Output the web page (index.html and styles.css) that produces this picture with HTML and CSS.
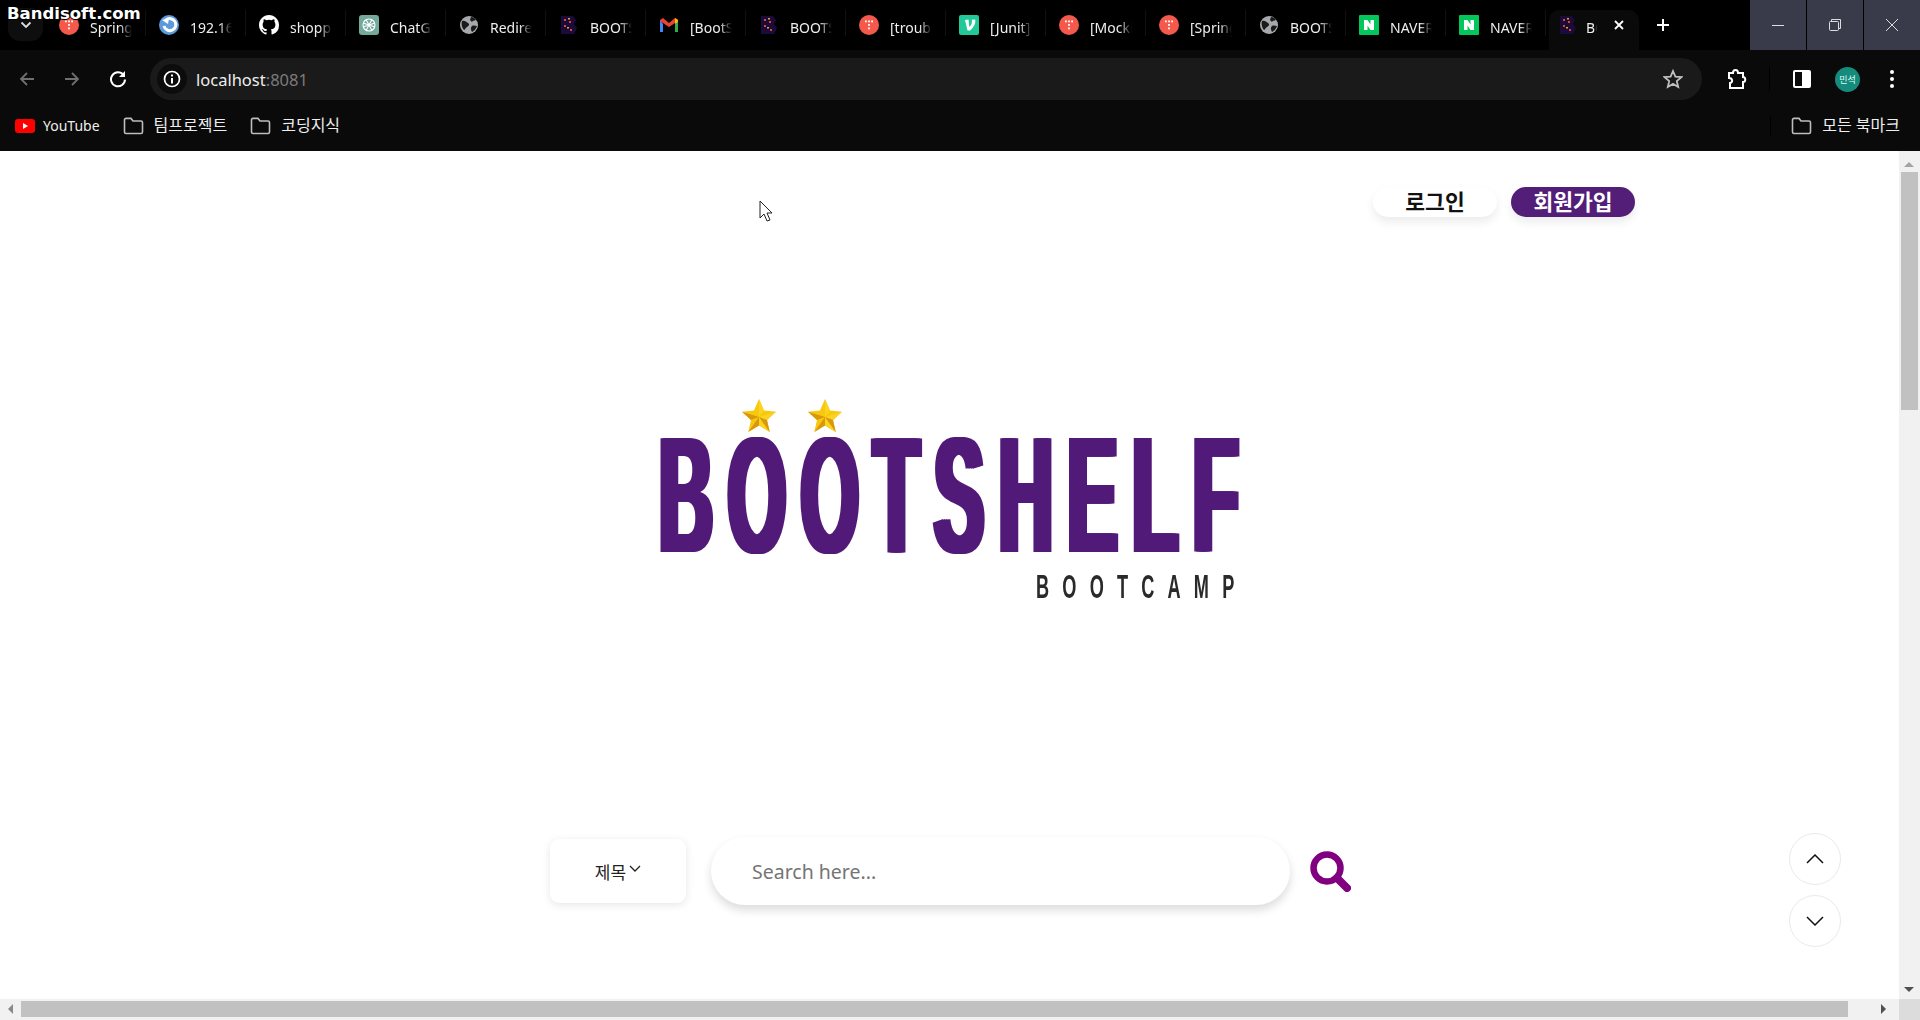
FILE: index.html
```html
<!DOCTYPE html>
<html lang="ko">
<head>
  <meta charset="UTF-8">
  <title>BOOTSHELF</title>
  <link rel="stylesheet" href="styles.css">
</head>
<body>
  <svg class="defs" width="0" height="0">
    <symbol id="tistory" viewBox="0 0 20 20">
      <circle cx="10" cy="10" r="10" fill="#f4594c"/>
      <g fill="#fff"><rect x="6" y="5.500" width="1.800" height="1.800"/><rect x="9.100" y="5.500" width="1.800" height="1.800"/><rect x="12.200" y="5.500" width="1.800" height="1.800"/><rect x="9.100" y="9" width="1.800" height="1.800"/><rect x="9.100" y="12.500" width="1.800" height="1.800"/></g>
    </symbol>
    <symbol id="globe" viewBox="0 0 20 20">
      <circle cx="10" cy="10" r="9" fill="#a5a8ad"/>
      <path d="M3 6c3-1 4 1 6 2s1 3-1 4-2 3-3 3c-2-2-3-6-2-9zM12 2c2 0 4 1 5 3-2 1-3 0-4 2l-2-2zM13 11c2-1 3 0 5 0-1 3-3 5-5 6-1-2-2-4 0-6z" fill="#1a1a1a"/>
    </symbol>
    <symbol id="boot" viewBox="0 0 20 20">
      <path d="M2 1h12l3 4-2 4 3 4-3 6H2z" fill="#1a0b3a"/>
      <g fill="#d8472f"><rect x="5" y="4" width="2" height="2"/><rect x="10" y="6" width="2" height="2"/><rect x="5" y="10" width="2" height="2"/><rect x="11" y="14" width="2" height="2"/></g>
      <g fill="#f0a030"><rect x="9" y="3" width="2" height="1.500"/><rect x="8" y="12" width="2" height="1.500"/></g>
    </symbol>
    <symbol id="naver" viewBox="0 0 20 20">
      <rect width="20" height="20" rx="1" fill="#03c75a"/>
      <path d="M5 5h3.500l3 4.500V5H15v10h-3.500l-3-4.500V15H5z" fill="#fff"/>
    </symbol>
    <symbol id="folder" viewBox="0 0 21 18">
      <path d="M1.500 3c0-1 .6-1.600 1.500-1.600h5l2 2.600h8c1 0 1.500.6 1.500 1.500V15c0 1-.6 1.500-1.500 1.500H3c-1 0-1.500-.6-1.500-1.500z" fill="none" stroke="#bdbdbd" stroke-width="1.600"/>
    </symbol>
    <symbol id="star" viewBox="0 0 34 33">
      <path d="M17 0l5 11.500 12 1.200-9 8.300 2.700 12L17 26.500 6.300 33 9 21 0 12.700l12-1.200z" fill="#f7c80c"/>
      <path d="M17 0l5 11.500L17 18zM34 12.700L25 21 17 18zM27.700 33L17 26.500V18z" fill="#fbd321"/>
      <path d="M17 18l8 3 2.700 12zM17 18v8.500L6.300 33zM17 18l-8 3-9-8.300z" fill="#d9960f"/>
    </symbol>
  </svg>

  <div class="watermark">Bandisoft.com</div>

  <header class="chrome">
    <div class="tabstrip">
      <div class="tab-menu">
        <svg width="12" height="8" viewBox="0 0 12 8"><path d="M1.500 1.500L6 6l4.500-4.500" fill="none" stroke="#ddd" stroke-width="1.800"/></svg>
      </div>
      <div class="tabs">
        <div class="tab"><svg class="favicon"><use href="#tistory"/></svg><span class="tab-title">Spring</span></div>
        <div class="tab">
          <svg class="favicon" viewBox="0 0 20 20"><circle cx="10" cy="10" r="10" fill="#5b9bdc"/><path d="M7 5a6 6 0 1 1-2 6" fill="none" stroke="#fff" stroke-width="3"/><path d="M3 5l7-2-1 6z" fill="#fff"/></svg>
          <span class="tab-title">192.168</span>
        </div>
        <div class="tab">
          <svg class="favicon" viewBox="0 0 16 16"><path fill="#fff" d="M8 0C3.580 0 0 3.580 0 8c0 3.540 2.290 6.530 5.470 7.590.4.070.55-.17.55-.38v-1.340c-2.230.48-2.700-1.070-2.700-1.070-.36-.92-.89-1.170-.89-1.170-.73-.5.060-.49.060-.49.800.060 1.230.830 1.230.830.710 1.220 1.870.870 2.330.660.070-.520.280-.870.510-1.070-1.780-.200-3.640-.890-3.640-3.950 0-.870.310-1.590.820-2.150-.080-.200-.360-1.020.080-2.120 0 0 .670-.210 2.200.820a7.600 7.600 0 0 1 4 0c1.530-1.040 2.200-.820 2.200-.820.440 1.100.160 1.920.080 2.120.510.560.820 1.270.820 2.150 0 3.070-1.870 3.750-3.650 3.950.290.250.540.730.540 1.480v2.200c0 .210.150.460.550.380A8.010 8.010 0 0 0 16 8c0-4.420-3.580-8-8-8z"/></svg>
          <span class="tab-title">shopping</span>
        </div>
        <div class="tab">
          <svg class="favicon" viewBox="0 0 20 20"><rect width="20" height="20" rx="3" fill="#74aa9c"/><g fill="none" stroke="#fff" stroke-width="1.100"><circle cx="10" cy="10" r="6"/><path d="M7 4.500l6 11M13 4.500l-6 11M4 8l12 4M16 8L4 12"/></g></svg>
          <span class="tab-title">ChatGPT</span>
        </div>
        <div class="tab"><svg class="favicon"><use href="#globe"/></svg><span class="tab-title">Redirect</span></div>
        <div class="tab"><svg class="favicon"><use href="#boot"/></svg><span class="tab-title">BOOTSHELF</span></div>
        <div class="tab">
          <svg class="favicon" viewBox="0 0 20 20"><path d="M1 5v12h3V9z" fill="#4285f4"/><path d="M19 5v12h-3V9z" fill="#34a853"/><path d="M1 5l3-2 6 5 6-5 3 2v1l-9 6-9-6z" fill="#ea4335"/><path d="M16 3l3 2v2l-3 2z" fill="#fbbc04"/></svg>
          <span class="tab-title">[BootShelf</span>
        </div>
        <div class="tab"><svg class="favicon"><use href="#boot"/></svg><span class="tab-title">BOOTSHELF</span></div>
        <div class="tab"><svg class="favicon"><use href="#tistory"/></svg><span class="tab-title">[trouble</span></div>
        <div class="tab">
          <svg class="favicon" viewBox="0 0 20 20"><rect width="20" height="20" rx="2" fill="#20c997"/><path d="M6 5l3.500-.5.800 7.500c1.700-1.700 2.700-3.300 2.700-5.800 0-.7-.2-1-.4-1.400L16 4.500c.3.500.4.900.4 1.700 0 3-2.200 6.500-5.200 9.300H8.500z" fill="#fff"/></svg>
          <span class="tab-title">[Junit]</span>
        </div>
        <div class="tab"><svg class="favicon"><use href="#tistory"/></svg><span class="tab-title">[Mockito</span></div>
        <div class="tab"><svg class="favicon"><use href="#tistory"/></svg><span class="tab-title">[Spring</span></div>
        <div class="tab"><svg class="favicon"><use href="#globe"/></svg><span class="tab-title">BOOTSHELF</span></div>
        <div class="tab"><svg class="favicon"><use href="#naver"/></svg><span class="tab-title">NAVER</span></div>
        <div class="tab"><svg class="favicon"><use href="#naver"/></svg><span class="tab-title">NAVER</span></div>
      </div>
      <div class="tab-active">
        <svg class="favicon"><use href="#boot"/></svg>
        <span class="tab-title tab-title-short">BOOTSHELF</span>
        <svg class="tab-close" width="12" height="12" viewBox="0 0 12 12"><path d="M2 2l8 8M10 2l-8 8" stroke="#fff" stroke-width="1.800"/></svg>
      </div>
      <svg class="tab-new" width="14" height="14" viewBox="0 0 14 14"><path d="M7 1v12M1 7h12" stroke="#fff" stroke-width="2"/></svg>
      <div class="window-btns">
        <div class="window-btn"><svg width="14" height="14" viewBox="0 0 14 14"><path d="M1 7.500h12" stroke="#ddd"/></svg></div>
        <div class="window-btn"><svg width="14" height="14" viewBox="0 0 14 14"><path d="M3.500 3V1.500h9v9H11" fill="none" stroke="#ddd"/><rect x="1.500" y="3.500" width="9" height="9" rx="1" fill="none" stroke="#ddd"/></svg></div>
        <div class="window-btn"><svg width="14" height="14" viewBox="0 0 14 14"><path d="M1 1l12 12M13 1L1 13" stroke="#ddd"/></svg></div>
      </div>
    </div>

    <div class="toolbar">
      <svg class="tool tool-back" width="16" height="16" viewBox="0 0 16 16"><path d="M15 8H2M8 2L2 8l6 6" fill="none" stroke="#6f6f6f" stroke-width="1.800"/></svg>
      <svg class="tool tool-forward" width="16" height="16" viewBox="0 0 16 16"><path d="M1 8h13M8 2l6 6-6 6" fill="none" stroke="#6f6f6f" stroke-width="1.800"/></svg>
      <svg class="tool tool-reload" width="18" height="18" viewBox="0 0 18 18"><path d="M14.500 5A7 7 0 1 0 16 9.500" fill="none" stroke="#fff" stroke-width="2"/><path d="M16 1v6h-6z" fill="#fff"/></svg>
      <div class="address">
        <div class="site-info">
          <svg width="18" height="18" viewBox="0 0 18 18"><circle cx="9" cy="9" r="7.500" fill="none" stroke="#fff" stroke-width="1.700"/><path d="M9 8v5.500" stroke="#fff" stroke-width="2"/><path d="M9 4.500v2" stroke="#fff" stroke-width="2"/></svg>
        </div>
        <span class="url">localhost<span class="url-port">:8081</span></span>
        <svg class="address-star" width="20" height="20" viewBox="0 0 20 20"><path d="M10 2l2.400 5.600 6 .5-4.600 4 1.400 5.900L10 14.900 4.800 18l1.400-5.900-4.600-4 6-.5z" fill="none" stroke="#c0c0c0" stroke-width="1.800"/></svg>
      </div>
      <svg class="tool tool-ext" width="20" height="22" viewBox="0 0 20 22"><path d="M2 5h4c0-4 5-4 5 0h5v4c3 0 3 5 0 5v6H3v-5c3 0 3-5-1-5z" fill="none" stroke="#fff" stroke-width="2"/></svg>
      <div class="tool-sep"></div>
      <svg class="tool tool-panel" width="18" height="18" viewBox="0 0 18 18"><rect width="18" height="18" rx="2" fill="#fff"/><rect x="2" y="2" width="7" height="14" fill="#0a0a0a"/></svg>
      <div class="avatar">민석</div>
      <svg class="tool tool-menu" width="6" height="20" viewBox="0 0 6 20"><circle cx="3" cy="3" r="2" fill="#fff"/><circle cx="3" cy="10" r="2" fill="#fff"/><circle cx="3" cy="17" r="2" fill="#fff"/></svg>
    </div>

    <div class="bookmarks">
      <div class="bookmark bookmark-yt">
        <svg width="20" height="14" viewBox="0 0 20 14"><rect width="20" height="14" rx="3" fill="#f00"/><path d="M8 4l5 3-5 3z" fill="#fff"/></svg>
        <span>YouTube</span>
      </div>
      <div class="bookmark"><svg class="folder"><use href="#folder"/></svg><span class="bookmark-ko">팀프로젝트</span></div>
      <div class="bookmark"><svg class="folder"><use href="#folder"/></svg><span class="bookmark-ko">코딩지식</span></div>
      <div class="bookmarks-sep"></div>
      <div class="bookmark"><svg class="folder"><use href="#folder"/></svg><span class="bookmark-ko">모든 북마크</span></div>
    </div>
  </header>

  <div class="viewport">
    <main class="page">
      <nav class="auth">
        <a class="auth-btn">로그인</a>
        <a class="auth-btn auth-btn-primary">회원가입</a>
      </nav>

      <div class="logo">
        <div class="logo-stars">
          <svg class="logo-star"><use href="#star"/></svg>
          <svg class="logo-star"><use href="#star"/></svg>
        </div>
        <div class="logo-word">BOOTSHELF</div>
        <div class="logo-sub">BOOTCAMP</div>
      </div>

      <form class="search">
        <div class="search-type">제목
          <svg width="12" height="8" viewBox="0 0 12 8"><path d="M1 1l5 5 5-5" fill="none" stroke="#222" stroke-width="1.300"/></svg>
        </div>
        <input class="search-input" type="text" placeholder="Search here...">
        <svg class="search-icon" width="41" height="41" viewBox="0 0 41 41"><circle cx="17" cy="17" r="13.500" fill="none" stroke="#800080" stroke-width="6.500"/><path d="M27 27l10 10" stroke="#800080" stroke-width="8" stroke-linecap="round"/></svg>
      </form>

      <div class="float-btns">
        <div class="float-btn"><svg width="18" height="10" viewBox="0 0 18 10"><path d="M1 9l8-8 8 8" fill="none" stroke="#111" stroke-width="1.500"/></svg></div>
        <div class="float-btn"><svg width="18" height="10" viewBox="0 0 18 10"><path d="M1 1l8 8 8-8" fill="none" stroke="#111" stroke-width="1.500"/></svg></div>
      </div>

      <svg class="cursor" width="14" height="22" viewBox="0 0 14 22"><path d="M1 1v17l4-4 3 7 3-1-3-7h5z" fill="#fff" stroke="#222" stroke-width="1"/></svg>
    </main>

    <div class="vscroll">
      <div class="arrow arrow-up"></div>
      <div class="vthumb"></div>
      <div class="arrow arrow-down"></div>
    </div>
    <div class="hscroll">
      <div class="arrow arrow-left"></div>
      <div class="hthumb"></div>
      <div class="arrow arrow-right"></div>
    </div>
    <div class="scroll-corner"></div>
  </div>
</body>
</html>
```

FILE: styles.css
```css
* {
  box-sizing: border-box;
}
html, body {
  margin: 0;
  width: 1920px;
  height: 1020px;
  overflow: hidden;
}
body {
  position: relative;
  display: flex;
  flex-direction: column;
  background-color: #fff;
  font-family: "Noto Sans", "Noto Sans CJK KR", sans-serif;
  color: #222;
}
.defs {
  position: absolute;
}
.watermark {
  position: absolute;
  left: 7px;
  top: 3px;
  z-index: 5;
  font-family: "DejaVu Sans", sans-serif;
  font-size: 16.500px;
  font-weight: 700;
  line-height: 22px;
  color: #fff;
  text-shadow: 1px 0 0 #000, -1px 0 0 #000, 0 1px 0 #000, 0 -1px 0 #000;
}

/* browser top */
.chrome {
  height: 151px;
  background-color: #0a0a0a;
  color: #eee;
  flex-shrink: 0;
}
.tabstrip {
  position: relative;
  display: flex;
  height: 50px;
  background-color: #000;
}
.tab-menu {
  width: 35px;
  height: 33px;
  margin: 8px 3px 0 8px;
  border-radius: 12px;
  background-color: #0e0e0e;
  display: flex;
  align-items: center;
  justify-content: center;
}
.tabs {
  display: flex;
}
.tab {
  width: 100px;
  height: 26px;
  margin-top: 10px;
  padding: 5px 0 0 13px;
  display: flex;
  gap: 11px;
  border-right: 1px solid #111;
}
.favicon {
  width: 20px;
  height: 20px;
  flex-shrink: 0;
}
.tab-title {
  width: 42px;
  height: 24px;
  overflow: hidden;
  white-space: nowrap;
  font-size: 14px;
  line-height: 26px;
  color: #eee;
  -webkit-mask-image: linear-gradient(to right, #000 70%, transparent);
  mask-image: linear-gradient(to right, #000 70%, transparent);
}
.tab-active {
  position: relative;
  width: 90px;
  height: 40px;
  margin: 10px 0 0 3px;
  padding: 5px 0 0 9px;
  display: flex;
  gap: 8px;
  border-radius: 10px 10px 0 0;
  background-color: #0a0a0a;
}
.tab-title-short {
  width: 11px;
}
.tab-close {
  position: absolute;
  left: 64px;
  top: 9px;
}
.tab-new {
  margin: 18px 0 0 17px;
}
.window-btns {
  margin-left: auto;
  display: flex;
  gap: 1px;
}
.window-btn {
  width: 56px;
  height: 50px;
  background-color: #3a3b4a;
  display: flex;
  align-items: center;
  justify-content: center;
  padding-bottom: 1px;
}

.toolbar {
  display: flex;
  align-items: center;
  height: 50px;
  padding-top: 8px;
}
.tool {
  flex-shrink: 0;
}
.tool-back {
  margin-left: 19px;
}
.tool-forward {
  margin-left: 29px;
}
.tool-reload {
  margin-left: 29px;
}
.address {
  display: flex;
  align-items: center;
  width: 1552px;
  height: 42px;
  margin-left: 23px;
  padding: 0 19px 0 7px;
  border-radius: 21px;
  background-color: #1a1a1a;
}
.site-info {
  width: 30px;
  height: 30px;
  border-radius: 50%;
  background-color: #0c0c0c;
  display: flex;
  align-items: center;
  justify-content: center;
}
.url {
  margin-left: 9px;
  font-size: 16.500px;
  color: #eee;
}
.url-port {
  color: #7a7a7a;
}
.address-star {
  margin-left: auto;
}
.tool-ext {
  margin-left: 25px;
}
.tool-sep {
  width: 1px;
  height: 24px;
  margin-left: 22px;
  background-color: #000;
}
.tool-panel {
  margin-left: 23px;
}
.avatar {
  width: 25px;
  height: 25px;
  margin-left: 24px;
  border-radius: 50%;
  background-color: #158b7c;
  color: #dff;
  font-size: 9px;
  line-height: 25px;
  text-align: center;
}
.tool-menu {
  margin-left: 29px;
}

.bookmarks {
  display: flex;
  align-items: center;
  height: 51px;
  padding: 0 20px 0 15px;
  font-size: 14px;
}
.bookmark {
  display: flex;
  align-items: center;
  gap: 10px;
  margin-right: 23px;
  white-space: nowrap;
}
.bookmark:last-child {
  margin-right: 0;
}
.bookmark-yt {
  gap: 8px;
}
.bookmark-ko {
  font-size: 16px;
  line-height: 20px;
  margin-top: -2px;
}
.folder {
  width: 21px;
  height: 18px;
}
.bookmarks-sep {
  width: 1px;
  height: 20px;
  margin-left: auto;
  margin-right: 20px;
  background-color: #000;
}

/* page + fake scrollbars */
.viewport {
  flex: 1;
  display: grid;
  grid-template-columns: 1fr 21px;
  grid-template-rows: 1fr 21px;
  min-height: 0;
}
.page {
  position: relative;
  display: flex;
  flex-direction: column;
  align-items: center;
  overflow: hidden;
}
.auth {
  align-self: stretch;
  display: flex;
  justify-content: flex-end;
  gap: 14px;
  padding: 36px 264px 0 0;
}
.auth-btn {
  width: 124px;
  height: 30px;
  border-radius: 15px;
  background-color: #fff;
  box-shadow: 0 5px 10px rgba(0, 0, 0, 0.08);
  color: #111;
  font-family: "Noto Sans CJK KR", sans-serif;
  font-size: 21.500px;
  font-weight: 700;
  line-height: 27px;
  text-align: center;
}
.auth-btn-primary {
  background-color: #521e78;
  color: #fff;
}

.logo {
  width: 582px;
  margin-top: 182px;
}
.logo-stars {
  display: flex;
  gap: 32px;
  padding-left: 83px;
}
.logo-star {
  width: 34px;
  height: 33px;
}
.logo-word {
  height: 120px;
  margin-top: 3px;
  font-family: "Liberation Sans", sans-serif;
  font-size: 166px;
  font-weight: 700;
  line-height: 120px;
  letter-spacing: 33px;
  white-space: nowrap;
  color: #521a78;
  text-shadow: 8px 0 0 #521a78, -8px 0 0 #521a78, 4px 0 0 #521a78, -4px 0 0 #521a78;
  transform: scaleX(0.45);
  transform-origin: left;
}
.logo-sub {
  margin: 19px 0 0 377px;
  font-family: "Liberation Sans", sans-serif;
  font-size: 33px;
  font-weight: 700;
  line-height: 26px;
  letter-spacing: 24px;
  white-space: nowrap;
  color: #2a2a2a;
  transform: scaleX(0.55);
  transform-origin: left;
}

.search {
  display: flex;
  align-items: center;
  margin: 237px 0 0 2px;
}
.search-type {
  display: flex;
  align-items: center;
  justify-content: center;
  gap: 3px;
  width: 136px;
  height: 64px;
  border-radius: 9px;
  background-color: #fff;
  box-shadow: 0 2px 8px rgba(0, 0, 0, 0.1);
  font-size: 17px;
}
.search-type svg {
  margin-bottom: 4px;
}
.search-input {
  width: 579px;
  height: 68px;
  margin-left: 25px;
  padding: 0 41px;
  border: none;
  border-radius: 34px;
  background-color: #fff;
  box-shadow: 0 5px 10px rgba(0, 0, 0, 0.14);
  font-family: "Noto Sans", sans-serif;
  font-size: 19.500px;
  outline: none;
}
.search-input::placeholder {
  color: #757575;
}
.search-icon {
  margin-left: 20px;
}

/* over the content */
.float-btns {
  position: absolute;
  left: 1789px;
  top: 682px;
  display: flex;
  flex-direction: column;
  gap: 10px;
}
.float-btn {
  width: 52px;
  height: 52px;
  border: 1px solid #eaeaea;
  border-radius: 50%;
  background-color: #fff;
  display: flex;
  align-items: center;
  justify-content: center;
}
.cursor {
  position: absolute;
  left: 759px;
  top: 49px;
}

.vscroll {
  position: relative;
  background-color: #f1f1f1;
}
.vthumb {
  position: absolute;
  left: 2px;
  right: 2px;
  top: 21px;
  height: 238px;
  background-color: #c1c1c1;
}
.hscroll {
  position: relative;
  background-color: #f1f1f1;
}
.hthumb {
  position: absolute;
  left: 21px;
  width: 1827px;
  top: 2px;
  bottom: 3px;
  background-color: #c1c1c1;
}
.scroll-corner {
  background-color: #dcdcdc;
}
.arrow {
  position: absolute;
  width: 0;
  height: 0;
  border: 5px solid transparent;
}
.arrow-up {
  left: 5px;
  top: 6px;
  border-bottom-color: #a3a3a3;
}
.arrow-down {
  left: 5px;
  bottom: 2px;
  border-top-color: #505050;
}
.arrow-left {
  left: 3px;
  top: 5px;
  border-right-color: #8a8a8a;
}
.arrow-right {
  left: 1881px;
  top: 5px;
  border-left-color: #505050;
}
```
